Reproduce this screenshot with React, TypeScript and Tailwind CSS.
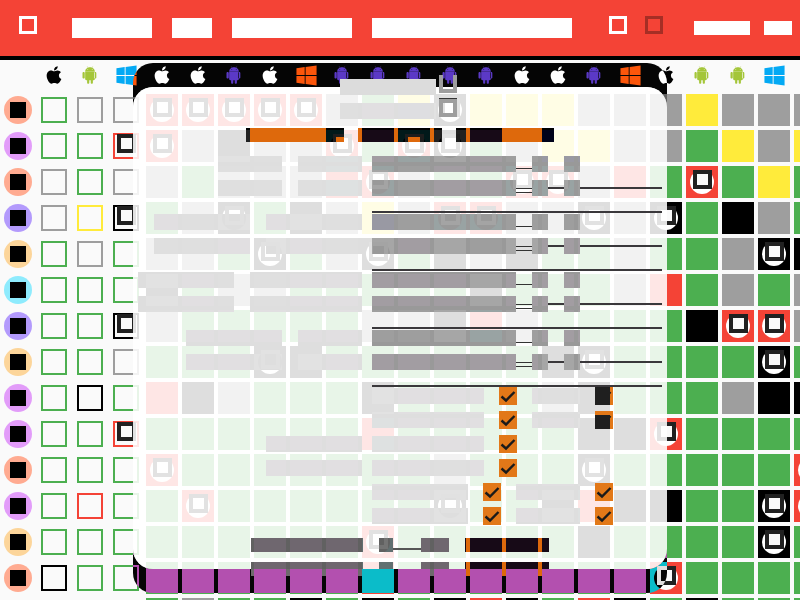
import React from "react";
import { FaApple, FaWindows } from "react-icons/fa";

const headerIcons = "ABWAABAWBBBBBAABWABBW".split("");

const rows = [
  "rrrrrWGYbYYYWWWYWWW",
  "rWBWWrGrbGWYYWWGYWY",
  "WGWWWRrWGGrrWRGrGYG",
  "GWbGBWYWrrWWbWbGBWG",
  "WWGbGWbGBWBGGWGGWbB",
  "BGWWGGGGGBGGGWRGWGW",
  "WGGGGGWWBRWGGGGBrrW",
  "GGGbBGGGGGGBbGGGGbG",
  "RBWGGGBGGGGWBGGGWBB",
  "GGGGGGRGGGGGBBrGGGG",
  "rGGGGGGGWGGGbGGGGGr",
  "GrGGGGGGbGGBRBBGGbr",
  "GGGGGGrGGGGGBGGGGbG",
  "GGGGGGRGGGGGGGrGGGG",
  "GWGGBGBGBRBGRBGBGGG",
];

const avatars = [
  "bg-[#ffab91]", "bg-[#e29cf9]", "bg-[#ffab91]", "bg-[#b39afc]", "bg-[#fcd59a]",
  "bg-[#8eebfd]", "bg-[#b39afc]", "bg-[#fcd59a]", "bg-[#e29cf9]", "bg-[#e29cf9]",
  "bg-[#ffab91]", "bg-[#e29cf9]", "bg-[#fcd59a]", "bg-[#ffab91]", "bg-[#ffab91]",
];

const outlines = [
  "GWW", "GGr", "WGW", "WYb", "GWG", "GGG", "GGb", "GGW", "GBG", "GGr", "GGG", "GRG", "GGG", "BGG", "GGG",
];

const cellColor: Record<string, string> = {
  G: "bg-[#4caf50]",
  W: "bg-[#9e9e9e]",
  R: "bg-[#f44336]",
  r: "bg-[#f44336]",
  B: "bg-black",
  b: "bg-black",
  Y: "bg-[#ffeb3b]",
};

const outlineColor: Record<string, string> = {
  G: "border-[#4caf50]",
  W: "border-[#9e9e9e]",
  R: "border-[#f44336]",
  r: "border-[#f44336]",
  B: "border-black",
  b: "border-black",
  Y: "border-[#ffeb3b]",
};

function AndroidIcon() {
  return (
    <svg viewBox="0 0 448 512" width="20" height="20" fill="#a4c639">
      <path d="M89.6 204.5v115.8c0 15.4-12.1 27.7-27.5 27.7-15.3 0-30.1-12.4-30.1-27.7V204.5c0-15.1 14.8-27.5 30.1-27.5 15.1 0 27.5 12.4 27.5 27.5zm10.8 157c0 16.4 13.2 29.6 29.6 29.6h19.9l.3 61.1c0 36.9 55.2 36.6 55.2 0v-61.1h37.2v61.1c0 36.7 55.5 36.8 55.5 0v-61.1h20.2c16.2 0 29.4-13.2 29.4-29.6V182.1H100.4v179.4zm248-189.1H99.3c0-42.8 25.6-80 63.6-99.4l-19.1-35.3c-2.8-4.9 4.3-8 6.7-3.8l19.4 35.6c34.9-15.5 75-14.7 108.3 0L297.5 34c2.5-4.3 9.5-1.1 6.7 3.8L285.1 73c37.7 19.4 63.3 56.6 63.3 99.4zm-170.7-55.5c0-5.7-4.6-10.5-10.5-10.5-5.7 0-10.2 4.8-10.2 10.5s4.6 10.5 10.2 10.5c5.9 0 10.5-4.8 10.5-10.5zm113.4 0c0-5.7-4.6-10.5-10.2-10.5-5.9 0-10.5 4.8-10.5 10.5s4.6 10.5 10.5 10.5c5.6 0 10.2-4.8 10.2-10.5zm94.8 87.6v115.8c0 15.4-12.4 27.7-27.7 27.7-15.1 0-27.5-12.4-27.5-27.7V204.5c0-15.1 12.4-27.5 27.5-27.5 15.4 0 27.7 12.4 27.7 27.5z" />
    </svg>
  );
}

function HeaderIcon({ kind }: { kind: string }) {
  if (kind === "A") return <FaApple size={20} className="text-black" />;
  if (kind === "B") return <AndroidIcon />;
  return <FaWindows size={23} className="text-[#03a9f4]" />;
}

function Square() {
  return <div className="w-[19px] h-[19px] shrink-0 border-4 border-[#212121] bg-[#fafafa]" />;
}

function Cell({ kind }: { kind: string }) {
  const hasIcon = kind === "r" || kind === "b";
  return (
    <div className="w-9 h-9 shrink-0 p-0.5">
      <div className={`w-8 h-8 flex items-center justify-center ${cellColor[kind]}`}>
        {hasIcon && (
          <div className="w-6 h-6 rounded-full bg-white flex justify-center items-start">
            <Square />
          </div>
        )}
      </div>
    </div>
  );
}

function Outline({ kind }: { kind: string }) {
  const hasIcon = kind === "r" || kind === "b";
  return (
    <div className="w-9 h-9 shrink-0 p-[5px]">
      <div className={`w-[26px] h-[26px] border-2 flex justify-center items-start ${outlineColor[kind]}`}>
        {hasIcon && (
          <div className="-mt-px">
            <Square />
          </div>
        )}
      </div>
    </div>
  );
}

function Light({ className }: { className: string }) {
  return <div className={`h-4 shrink-0 backdrop-invert bg-white/87 ${className}`} />;
}

function Mid({ className }: { className: string }) {
  return <div className={`h-4 shrink-0 backdrop-invert bg-white/60 ${className}`} />;
}

function Rule({ className }: { className: string }) {
  return <div className={`h-4 shrink-0 pt-[7px] ${className}`}><div className="h-0.5 bg-[#3a383b]" /></div>;
}

function Check({ cover }: { cover?: "full" | "lower" }) {
  return (
    <div className="relative w-[18px] h-[18px] shrink-0 bg-[#e27818]">
      <svg viewBox="0 0 18 18" className="w-[18px] h-[18px]" fill="none" stroke="#1a1a1a" strokeWidth="2.4">
        <path d="M2.5 9.5 L7 13.5 L15.5 5" />
      </svg>
      {cover === "full" && <div className="absolute left-0 top-0 w-[15px] h-[18px] bg-[#1f1f1f]" />}
      {cover === "lower" && <div className="absolute left-0 bottom-0 w-[15px] h-[14px] bg-[#1f1f1f]" />}
    </div>
  );
}

// two text lines on the left of the sheet, with the table row on the right of it
function SheetRow({ first, second, lower }: { first: string; second: string; lower?: boolean }) {
  return (
    <div className="flex h-4">
      <Light className={first} />
      <Light className={`ml-4 ${second}`} />
      <Mid className="ml-[10px] w-[144px]" />
      <div className="relative w-4 h-4 shrink-0">
        {lower && <div className="absolute left-0 right-0 top-[8px] h-px bg-[#333]" />}
        <div className="absolute left-0 right-0 top-[12px] h-px bg-[#333]" />
      </div>
      <Mid className="w-4" />
      {lower ? <Rule className="w-4" /> : <div className="w-4 shrink-0" />}
      <Mid className="w-4" />
      {lower && <Rule className="w-[82px]" />}
    </div>
  );
}

function SheetGroup({ first, second }: { first: string; second: string }) {
  return (
    <div className="flex flex-col gap-2">
      <SheetRow first={first} second={second} />
      <SheetRow first={first} second={second} lower />
    </div>
  );
}

function Divider() {
  return <div className="ml-[372px] w-[290px] h-0.5 mt-[15px] mb-px bg-[#3a383b]" />;
}

export default function App() {
  return (
    <div className="relative w-[800px] h-[600px] overflow-hidden bg-[#fafafa]">
      {/* app bar */}
      <div className="flex h-[60px] bg-[#f44336] border-b-4 border-black">
        <div className="ml-[19px] mt-4 w-[18px] h-[18px] border-[3px] border-white" />
        <div className="ml-[35px] mt-[18px] w-20 h-5 bg-white" />
        <div className="ml-5 mt-[18px] w-10 h-5 bg-white" />
        <div className="ml-5 mt-[18px] w-[120px] h-5 bg-white" />
        <div className="ml-5 mt-[18px] w-[200px] h-5 bg-white" />
        <div className="ml-[37px] mt-4 w-[18px] h-[18px] border-[3px] border-white" />
        <div className="ml-[18px] mt-4 w-[18px] h-[18px] border-[3px] border-[#a62e25]" />
        <div className="ml-[31px] mt-[21px] w-14 h-3.5 bg-white" />
        <div className="ml-3.5 mt-[21px] w-7 h-3.5 bg-white" />
      </div>

      {/* table */}
      <div className="flex h-8 pl-9 pt-[3px]">
        {headerIcons.map((kind, i) => (
          <div key={i} className="w-9 h-6 shrink-0 flex items-center justify-center">
            <HeaderIcon kind={kind} />
          </div>
        ))}
      </div>
      {rows.map((row, r) => (
        <div key={r} className="flex h-9">
          <div className="w-9 h-9 shrink-0 p-1">
            <div className={`w-7 h-7 rounded-full flex items-center justify-center ${avatars[r]}`}>
              <div className="w-4 h-4 bg-black" />
            </div>
          </div>
          {outlines[r].split("").map((kind, i) => (
            <Outline key={i} kind={kind} />
          ))}
          {row.split("").map((kind, i) => (
            <Cell key={i} kind={kind} />
          ))}
        </div>
      ))}

      {/* sheet: inverted frame, then the frosted panel */}
      <div className="absolute left-[133px] top-[63px] w-[534px] h-[530px] rounded-[20px] backdrop-invert" />
      <div className="absolute left-[133px] top-[87px] w-[534px] h-[482px] rounded-[20px] backdrop-invert bg-white/87" />

      {/* sheet content */}
      <div className="absolute inset-0 flex flex-col pt-[75px]">
        <div className="flex h-11 ml-[340px]">
          <div className="flex flex-col gap-2 pt-1 w-24">
            <div className="h-4 bg-[#dcdcdc]" />
            <Light className="w-24" />
          </div>
          <div className="ml-[3px] w-[18px] flex flex-col">
            <div className="h-[18px] border-x-4 border-b-4 border-[#9e9e9e]" />
            <div className="h-px mt-[5px] bg-[#333]" />
            <div className="h-[18px] border-4 border-[#9e9e9e]" />
          </div>
        </div>

        <div className="flex h-3.5 ml-[246px] mt-[9px]">
          <div className="w-1 backdrop-invert" />
          <div className="w-[76px] bg-[#de690c]" />
          <div className="relative w-[18px] backdrop-invert">
            <div className="absolute left-[10px] right-0 bottom-0 h-[5px] bg-[#de690c]" />
          </div>
          <div className="w-3.5" />
          <div className="w-1 bg-[#de690c]" />
          <div className="w-8 backdrop-invert" />
          <div className="w-1 bg-[#de690c]" />
          <div className="relative w-8 backdrop-invert">
            <div className="absolute left-[10px] w-[12px] bottom-0 h-[5px] bg-[#de690c]" />
          </div>
          <div className="w-1 bg-[#de690c]" />
          <div className="w-2 backdrop-invert" />
          <div className="w-3.5" />
          <div className="w-2.5 backdrop-invert" />
          <div className="w-1 bg-[#de690c]" />
          <div className="w-8 backdrop-invert" />
          <div className="w-10 bg-[#de690c]" />
          <div className="w-3 backdrop-invert" />
        </div>

        <div className="flex flex-col mt-3.5">
          <SheetGroup first="ml-[218px] w-16" second="w-16" />
          <Divider />
          <SheetGroup first="ml-[154px] w-24" second="w-24" />
          <Divider />
          <SheetGroup first="ml-[138px] w-24" second="w-[112px]" />
          <Divider />
          <SheetGroup first="ml-[186px] w-24" second="w-16" />
          <Divider />
        </div>

        <div className="flex flex-col gap-2">
          <div className="flex h-4 ml-[372px]">
            <Light className="w-[112px]" />
            <div className="ml-[15px] -mt-px"><Check /></div>
            <Light className="ml-[15px] w-12" />
            <div className="ml-[15px] -mt-px"><Check cover="full" /></div>
          </div>
          <div className="flex h-4 ml-[372px]">
            <Light className="w-[112px]" />
            <div className="ml-[15px] -mt-px"><Check /></div>
            <Light className="ml-[15px] w-12" />
            <div className="ml-[15px] -mt-px"><Check cover="lower" /></div>
          </div>
          <div className="flex h-4 ml-[266px]">
            <Light className="w-24" />
            <Light className="ml-[10px] w-[112px]" />
            <div className="ml-[15px] -mt-px"><Check /></div>
          </div>
          <div className="flex h-4 ml-[266px]">
            <Light className="w-24" />
            <Light className="ml-[10px] w-[112px]" />
            <div className="ml-[15px] -mt-px"><Check /></div>
          </div>
          <div className="flex h-4 ml-[372px]">
            <Light className="w-24" />
            <div className="ml-[15px] -mt-px"><Check /></div>
            <Light className="ml-[15px] w-16" />
            <div className="ml-[15px] -mt-px"><Check /></div>
          </div>
          <div className="flex h-4 ml-[372px]">
            <Light className="w-24" />
            <div className="ml-[15px] -mt-px"><Check /></div>
            <Light className="ml-[15px] w-16" />
            <div className="ml-[15px] -mt-px"><Check /></div>
          </div>
        </div>

        <div className="flex h-3.5 ml-[251px] mt-3.5">
          <div className="w-[112px] backdrop-invert bg-white/38" />
          <div className="ml-4 w-3.5 backdrop-invert bg-white/38" />
          <div className="w-7 pt-[10px]"><div className="h-0.5 bg-[#555]" /></div>
          <div className="w-7 backdrop-invert bg-white/38" />
          <div className="ml-4 w-px backdrop-invert" />
          <div className="w-1 bg-[#de690c]" />
          <div className="w-8 backdrop-invert" />
          <div className="w-1 bg-[#de690c]" />
          <div className="w-8 backdrop-invert" />
          <div className="w-1 bg-[#de690c]" />
          <div className="w-[7px] backdrop-invert" />
        </div>
        <div className="flex h-[7px] ml-[251px] mt-2.5">
          <div className="w-[112px] backdrop-invert bg-white/38" />
          <div className="ml-4 w-3.5 backdrop-invert bg-white/38" />
          <div className="ml-7 w-7 backdrop-invert bg-white/38" />
          <div className="ml-4 w-px backdrop-invert" />
          <div className="w-1 bg-[#de690c]" />
          <div className="w-8 backdrop-invert" />
          <div className="w-1 bg-[#de690c]" />
          <div className="w-8 backdrop-invert" />
          <div className="w-1 bg-[#de690c]" />
          <div className="w-[7px] backdrop-invert" />
        </div>
        <div className="flex h-[7px] ml-[251px]">
          <div className="w-[3px] bg-[#6f6a6d]" />
          <div className="ml-8 w-1 bg-[#6f6a6d]" />
          <div className="ml-8 w-1 bg-[#6f6a6d]" />
          <div className="ml-8 w-1 bg-[#6f6a6d]" />
          <div className="ml-[68px] w-1 bg-[#6f6a6d]" />
          <div className="ml-8 w-1 bg-[#de690c]" />
          <div className="ml-8 w-1 bg-[#de690c]" />
          <div className="ml-8 w-1 bg-[#de690c]" />
        </div>
      </div>
    </div>
  );
}
